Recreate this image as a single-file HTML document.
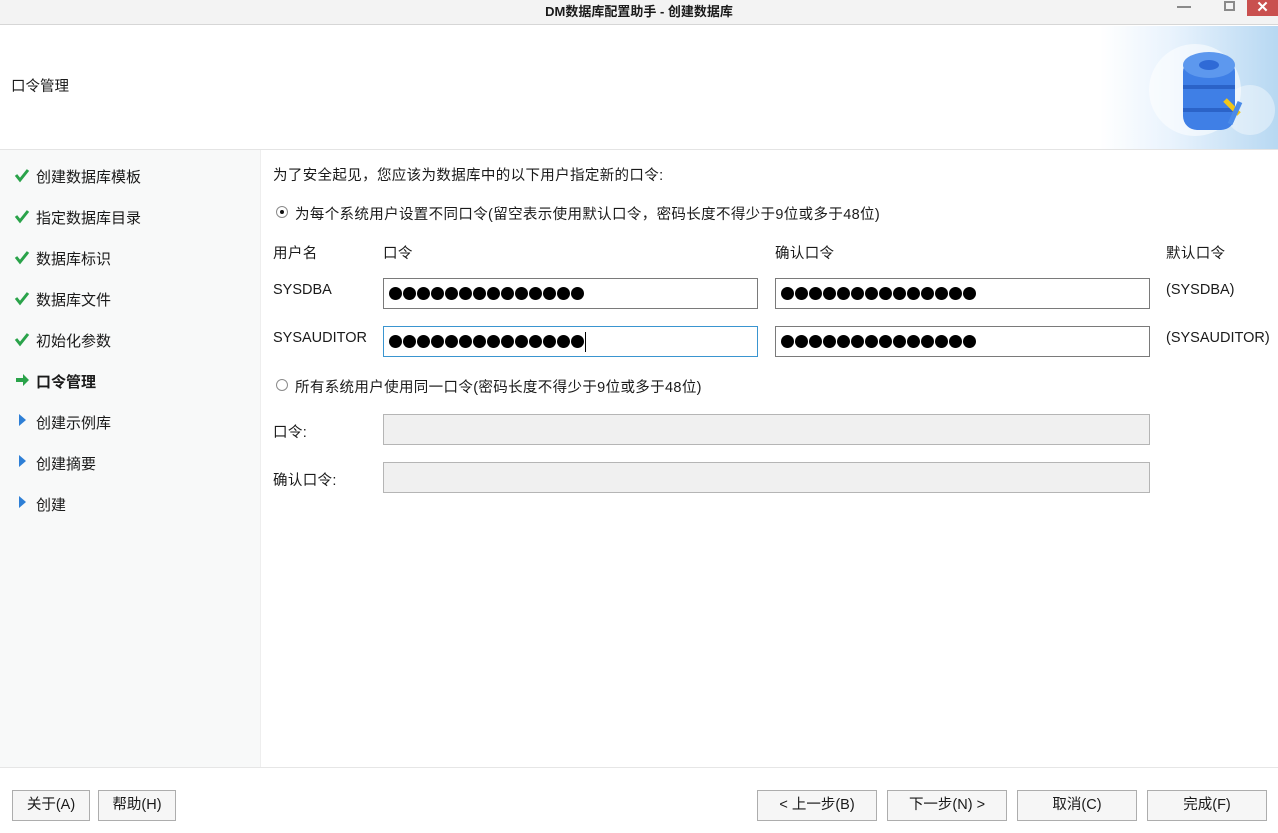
<!DOCTYPE html>
<html><head><meta charset="utf-8"><style>
*{margin:0;padding:0;box-sizing:border-box}
body{width:1278px;height:833px;overflow:hidden;background:#fff;font-family:"Liberation Sans","Noto Sans CJK SC",sans-serif;font-size:14.5px;color:#1a1a1a;position:relative}
.a{position:absolute;white-space:nowrap}
.c{letter-spacing:.35px}
.title{left:0;top:0;width:1278px;height:25px;background:#f3f3f3;border-bottom:1px solid #d6d6d6;text-align:center;font-weight:bold;font-size:13px;line-height:24px}
.hdr{left:0;top:25px;width:1278px;height:125px;border-bottom:1px solid #e4e4e4;background:#fff}
.left{left:0;top:150px;width:261px;height:617px;background:#f8f9f9;border-right:1px solid #eee}
.nav{left:36px;font-size:15px}
.inp{position:absolute;height:31px;border:1px solid #7a7a7a;background:#fff;padding:8px 0 0 5px}
.inp i{display:inline-block;width:13px;height:13px;border-radius:50%;background:#000;margin-right:1px;vertical-align:top}
.dis{position:absolute;height:31px;border:1px solid #b5b5b5;background:#f0f0f0}
.btn{position:absolute;top:790px;height:31px;border:1px solid #adadad;background:#f6f6f6;text-align:center;line-height:29px;font-size:14.5px}
.radio{position:absolute;width:12px;height:12px;border:1px solid #8a8a8a;border-radius:50%;background:#fff}
</style></head><body>
<div class="a title">DM数据库配置助手 - 创建数据库</div>
<div class="a" style="left:1177px;top:6px;width:14px;height:2px;background:#8a8a8a"></div>
<div class="a" style="left:1224px;top:1px;width:11px;height:10px;border:2px solid #8a8a8a"></div>
<div class="a" style="left:1247px;top:0;width:31px;height:16px;background:#c9504f;color:#fff;text-align:center;font-size:15px;line-height:15px;font-weight:bold">✕</div>
<div class="a hdr"></div>
<div class="a" style="left:1100px;top:26px;width:178px;height:123px;background:linear-gradient(90deg,#fff,#e9f3fd 40%,#b7d8f2)"></div>
<svg class="a" style="left:1140px;top:30px" width="138" height="115">
<circle cx="55" cy="60" r="46" fill="#fff" opacity=".55"/>
<circle cx="110" cy="80" r="25" fill="#fff" opacity=".4"/>
<rect x="43" y="28" width="52" height="72" rx="14" fill="#3f7fe6"/>
<ellipse cx="69" cy="35" rx="26" ry="13" fill="#5d98ee"/>
<ellipse cx="69" cy="35" rx="10" ry="5" fill="#2f6ad6"/>
<rect x="43" y="55" width="52" height="4" fill="#2b63c8"/><rect x="43" y="78" width="52" height="4" fill="#2b63c8"/>
<path d="M85 70 l14 14" stroke="#f2c616" stroke-width="5"/>
<path d="M100 72 l-10 22" stroke="#4a8ae8" stroke-width="5"/>
</svg>
<div class="a" style="left:11px;top:75px">口令管理</div>
<div class="a left"></div>
<svg class="a" style="left:14px;top:167px" width="16" height="220">
<g fill="none" stroke="#2aa34a" stroke-width="3"><path d="M2 8 l4 5 l8-10"/><path d="M2 49 l4 5 l8-10"/><path d="M2 90 l4 5 l8-10"/><path d="M2 131 l4 5 l8-10"/><path d="M2 172 l4 5 l8-10"/></g>
<path d="M2 211 h7 v-4 l6 6 l-6 6 v-4 h-7z" fill="#2aa34a"/>
</svg>
<svg class="a" style="left:18px;top:412px" width="10" height="100"><g fill="#2e7fd6"><path d="M1 2 l7 6 l-7 6z"/><path d="M1 43 l7 6 l-7 6z"/><path d="M1 84 l7 6 l-7 6z"/></g></svg>
<div class="a nav" style="top:166px">创建数据库模板</div>
<div class="a nav" style="top:207px">指定数据库目录</div>
<div class="a nav" style="top:248px">数据库标识</div>
<div class="a nav" style="top:289px">数据库文件</div>
<div class="a nav" style="top:330px">初始化参数</div>
<div class="a nav" style="top:371px;font-weight:bold">口令管理</div>
<div class="a nav" style="top:412px">创建示例库</div>
<div class="a nav" style="top:453px">创建摘要</div>
<div class="a nav" style="top:494px">创建</div>
<div class="a c" style="left:273px;top:164px">为了安全起见，您应该为数据库中的以下用户指定新的口令:</div>
<div class="radio" style="left:276px;top:206px"></div><div class="a" style="left:280px;top:210px;width:4px;height:4px;border-radius:50%;background:#111"></div>
<div class="a c" style="left:295px;top:203px">为每个系统用户设置不同口令(留空表示使用默认口令，密码长度不得少于9位或多于48位)</div>
<div class="a c" style="left:273px;top:242px">用户名</div>
<div class="a c" style="left:383px;top:242px">口令</div>
<div class="a c" style="left:775px;top:242px">确认口令</div>
<div class="a c" style="left:1166px;top:242px">默认口令</div>
<div class="a" style="left:273px;top:282px">SYSDBA</div>
<div class="a" style="left:273px;top:330px">SYSAUDITOR</div>
<div class="a" style="left:1166px;top:282px">(SYSDBA)</div>
<div class="a" style="left:1166px;top:330px">(SYSAUDITOR)</div>
<div class="inp" style="left:383px;top:278px;width:375px"><i></i><i></i><i></i><i></i><i></i><i></i><i></i><i></i><i></i><i></i><i></i><i></i><i></i><i></i></div>
<div class="inp" style="left:775px;top:278px;width:375px"><i></i><i></i><i></i><i></i><i></i><i></i><i></i><i></i><i></i><i></i><i></i><i></i><i></i><i></i></div>
<div class="inp" style="left:383px;top:326px;width:375px;border-color:#3a95d0"><i></i><i></i><i></i><i></i><i></i><i></i><i></i><i></i><i></i><i></i><i></i><i></i><i></i><i></i><span style="display:inline-block;width:1px;height:20px;background:#000;vertical-align:top;margin-top:-3px"></span></div>
<div class="inp" style="left:775px;top:326px;width:375px"><i></i><i></i><i></i><i></i><i></i><i></i><i></i><i></i><i></i><i></i><i></i><i></i><i></i><i></i></div>
<div class="radio" style="left:276px;top:379px"></div>
<div class="a c" style="left:295px;top:376px">所有系统用户使用同一口令(密码长度不得少于9位或多于48位)</div>
<div class="a c" style="left:273px;top:421px">口令:</div>
<div class="a c" style="left:273px;top:469px">确认口令:</div>
<div class="dis" style="left:383px;top:414px;width:767px"></div>
<div class="dis" style="left:383px;top:462px;width:767px"></div>
<div class="a" style="left:0;top:767px;width:1278px;height:1px;background:#e6e6e6"></div>
<div class="btn" style="left:12px;width:78px">关于(A)</div>
<div class="btn" style="left:98px;width:78px">帮助(H)</div>
<div class="btn" style="left:757px;width:120px">&lt; 上一步(B)</div>
<div class="btn" style="left:887px;width:120px">下一步(N) &gt;</div>
<div class="btn" style="left:1017px;width:120px">取消(C)</div>
<div class="btn" style="left:1147px;width:120px">完成(F)</div>
</body></html>
